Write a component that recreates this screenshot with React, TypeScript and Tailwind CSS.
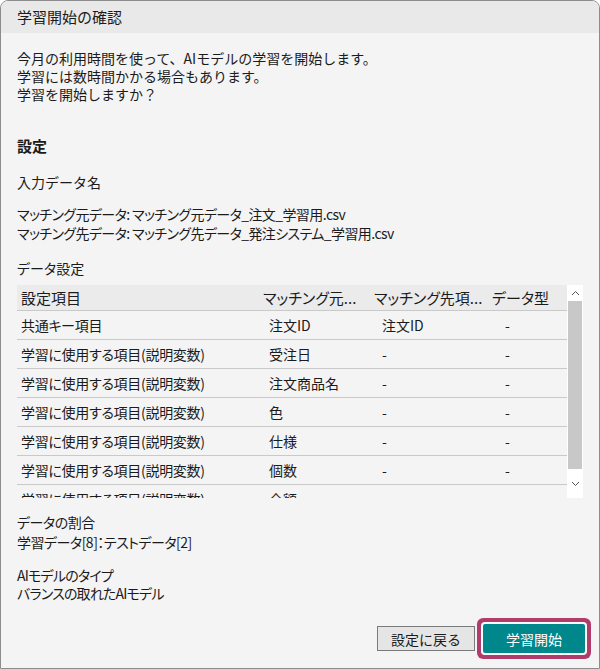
import React from 'react';

const rows = [
  { item: '共通キー項目', src: '注文ID', dst: '注文ID', type: '-' },
  { item: '学習に使用する項目(説明変数)', src: '受注日', dst: '-', type: '-' },
  { item: '学習に使用する項目(説明変数)', src: '注文商品名', dst: '-', type: '-' },
  { item: '学習に使用する項目(説明変数)', src: '色', dst: '-', type: '-' },
  { item: '学習に使用する項目(説明変数)', src: '仕様', dst: '-', type: '-' },
  { item: '学習に使用する項目(説明変数)', src: '個数', dst: '-', type: '-' },
  { item: '学習に使用する項目(説明変数)', src: '金額', dst: '-', type: '-' },
];

const App = () => {
  return (
    <div
      className="w-[600px] h-[669px] bg-[#f4f4f4] border border-[#8c8c8c] rounded-t-[8px] overflow-hidden flex flex-col text-[#1b1b1b]"
      style={{ fontFamily: '"Noto Sans CJK JP", "Noto Sans", sans-serif' }}
    >
      {/* Title bar */}
      <div className="h-[32px] shrink-0 bg-[#e9e9e9] flex items-center px-[16px] text-[15px]">
        学習開始の確認
      </div>

      <div className="flex-1 flex flex-col px-[16px] text-[14px]">
        <div className="mt-[16px] leading-[18px]">
          <div>今月の利用時間を使って、AIモデルの学習を開始します。</div>
          <div>学習には数時間かかる場合もあります。</div>
          <div>学習を開始しますか？</div>
        </div>

        <div className="mt-[34px] leading-[18px] text-[15px] font-bold">設定</div>
        <div className="mt-[18px] leading-[18px]">入力データ名</div>

        <div className="mt-[14px] leading-[19px] tracking-[-0.6px] [font-feature-settings:'palt']">
          <div>マッチング元データ: マッチング元データ_注文_学習用.csv</div>
          <div>マッチング先データ: マッチング先データ_発注システム_学習用.csv</div>
        </div>

        <div className="mt-[16px] leading-[18px] [font-feature-settings:'palt']">データ設定</div>

        {/* Data table */}
        <div className="mt-[8px] h-[213px] shrink-0 flex">
          <div className="flex-1 overflow-hidden [font-feature-settings:'palt']">
            <div className="grid grid-cols-[241px_111px_118px_1fr] h-[26px] items-center bg-[#ebebeb] border-b border-[#c9c9c9] text-[15px] leading-[20px]">
              <div className="pl-[4px] whitespace-nowrap">設定項目</div>
              <div className="pl-[5px] whitespace-nowrap overflow-hidden">マッチング元...</div>
              <div className="pl-[5px] whitespace-nowrap overflow-hidden">マッチング先項...</div>
              <div className="pl-[5px] whitespace-nowrap">データ型</div>
            </div>
            {rows.map((r, i) => (
              <div
                key={i}
                className="grid grid-cols-[241px_111px_118px_1fr] h-[29px] items-center border-b border-[#c9c9c9] leading-[18px]"
              >
                <div className="pl-[4px] truncate tracking-[-0.3px]">{r.item}</div>
                <div className="pl-[11px] truncate">{r.src}</div>
                <div className="pl-[13px] truncate">{r.dst}</div>
                <div className="pl-[18px] truncate">{r.type}</div>
              </div>
            ))}
          </div>
          {/* Scrollbar */}
          <div className="w-[16px] shrink-0 bg-white flex flex-col items-center">
            <div className="h-[16px] w-full flex items-center justify-center">
              <svg width="9" height="6" viewBox="0 0 9 6">
                <polyline points="1,5 4.5,1.5 8,5" fill="none" stroke="#555" strokeWidth="1" />
              </svg>
            </div>
            <div className="h-[168px] w-[14px] bg-[#c8c8c8]" />
            <div className="flex-1 w-full flex items-center justify-center">
              <svg width="9" height="6" viewBox="0 0 9 6">
                <polyline points="1,1 4.5,4.5 8,1" fill="none" stroke="#555" strokeWidth="1" />
              </svg>
            </div>
          </div>
        </div>

        <div className="mt-[14px] leading-[20px] tracking-[-0.5px] [font-feature-settings:'palt']">
          <div>データの割合</div>
          <div>学習データ[8]：テストデータ[2]</div>
        </div>

        <div className="mt-[14px] leading-[18px] tracking-[-0.8px] [font-feature-settings:'palt']">
          <div>AIモデルのタイプ</div>
          <div>バランスの取れたAIモデル</div>
        </div>

        {/* Buttons */}
        <div className="mt-auto pb-[15px] -mr-[2px] flex justify-end items-center gap-[8px]">
          <button className="w-[98px] h-[25px] bg-[#e5e5e5] border border-[#7a7a7a] text-[14px] leading-[18px] text-[#1b1b1b]">
            設定に戻る
          </button>
          <button className="w-[102px] h-[29px] bg-[#00878c] text-white text-[14px] leading-[18px] rounded-[2px] shadow-[0_0_0_2px_#ffffff,0_0_0_6px_#b03c6b]">
            学習開始
          </button>
        </div>
      </div>
    </div>
  );
};

export default App;
